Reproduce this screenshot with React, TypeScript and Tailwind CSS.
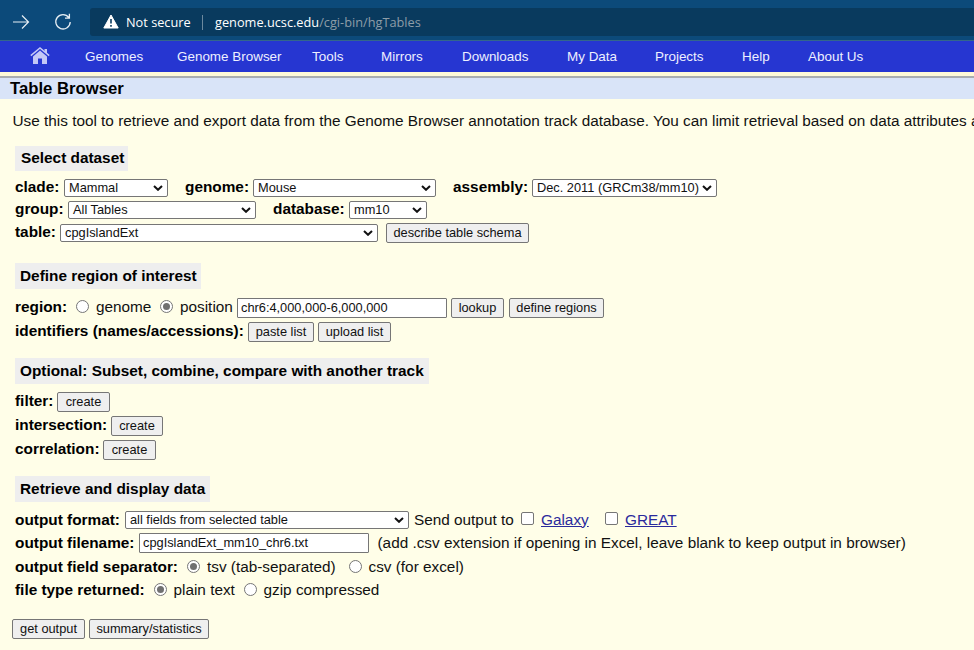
import type { ReactNode } from 'react';

type BoxProps = { className?: string; children?: ReactNode };

function Label({ className = 'pb-[2px]', children }: BoxProps) {
  return <span className={`shrink-0 whitespace-nowrap text-[15.36px] leading-[18px] font-bold text-black ${className}`}>{children}</span>;
}

function Text({ className = '', children }: BoxProps) {
  return <span className={`shrink-0 whitespace-nowrap text-[15.34px] leading-[18px] ${className}`}>{children}</span>;
}

function Select({ className = '', children }: BoxProps) {
  return (
    <span className={`flex h-[18px] shrink-0 items-center justify-between rounded-[2px] border border-[#767676] bg-white pr-[4px] pl-[4px] text-[12.8px] whitespace-nowrap ${className}`}>
      <span>{children}</span>
      <svg className="h-[6px] w-[10px] shrink-0" viewBox="0 0 10 6" fill="none" stroke="#111" strokeWidth="2">
        <path d="M1 1L5 4.8L9 1" />
      </svg>
    </span>
  );
}

function Button({ className = '', children }: BoxProps) {
  return (
    <button className={`flex h-[20px] shrink-0 items-center justify-center rounded-[2px] border border-[#767676] bg-[#efefef] text-[12.8px] whitespace-nowrap ${className}`}>
      {children}
    </button>
  );
}

function Field({ className = '', children }: BoxProps) {
  return (
    <span className={`flex h-[20px] shrink-0 items-center rounded-[1px] border border-[#767676] bg-white pl-[3px] text-[12.8px] whitespace-nowrap ${className}`}>
      {children}
    </span>
  );
}

function Radio({ checked = false, className = '' }: { checked?: boolean; className?: string }) {
  return (
    <span className={`flex size-[13px] shrink-0 items-center justify-center rounded-full border border-[#767676] bg-white ${className}`}>
      {checked && <span className="size-[7px] rounded-full bg-[#707070]" />}
    </span>
  );
}

function Check({ className = '' }: { className?: string }) {
  return <span className={`size-[13px] shrink-0 rounded-[2px] border border-[#767676] bg-white ${className}`} />;
}

function Heading({ className = '', children }: BoxProps) {
  return (
    <h2 className={`flex items-center bg-[#eeeeee] text-[15.36px] font-bold whitespace-nowrap text-black ${className}`}>{children}</h2>
  );
}

function Row({ className = '', children }: BoxProps) {
  return <div className={`flex items-center ${className}`}>{children}</div>;
}

export default function App() {
  return (
    <div className="h-[650px] w-[974px] overflow-hidden bg-[#fffee8] font-['Liberation_Sans',Arial,sans-serif] text-[#111]">
      <div className="flex h-[40px] items-center bg-[#0c4a7a] pt-[4px]">
        <svg className="ml-[12px] size-[18px] shrink-0" viewBox="0 0 18 18" fill="none" stroke="#e6eef4" strokeWidth="1.2">
          <path d="M1 9H16.5M10 2.5L16.5 9L10 15.5" />
        </svg>
        <svg className="ml-[24px] size-[18px] shrink-0" viewBox="0 0 18 18" fill="none" stroke="#e6eef4" strokeWidth="1.3">
          <path d="M14.8 4.5A7.2 7.2 0 1 0 16.2 9M11 5.2H15.4V0.8" />
        </svg>
        <div className="ml-[18px] flex h-[28px] flex-1 items-center rounded-l-[3px] bg-[#093a5e] font-['Open_Sans','Noto_Sans',sans-serif] text-[12.75px] whitespace-nowrap text-white">
          <svg className="-mt-[2px] ml-[13px] h-[15px] w-[16px] shrink-0" viewBox="0 0 16 15">
            <path d="M8 1L15.2 14H0.8Z" fill="#fff" stroke="#fff" strokeWidth="1" strokeLinejoin="round" />
            <path d="M8 5V9.5M8 11V12.7" stroke="#093a5e" strokeWidth="1.6" />
          </svg>
          <span className="ml-[7px] w-[76px] pt-px">Not secure</span>
          <span className="mr-[12px] h-[15px] w-px bg-[#6c899e]" />
          <span className="pt-px">genome.ucsc.edu</span>
          <span className="pt-px text-[#8d9da8]">/cgi-bin/hgTables</span>
        </div>
      </div>
      <div className="h-px bg-[#33668b]" />
      <nav className="flex h-[31px] items-center bg-[#2636d1] pt-px text-[13.44px] whitespace-nowrap text-[#eef0ff]">
        <svg className="-mt-[2px] ml-[30px] h-[18px] w-[20px] shrink-0" viewBox="0 0 20 18">
          <path d="M0.8 8.7L10 1L19.2 8.7" fill="none" stroke="#c4c8f6" strokeWidth="1.5" />
          <path d="M14.5 2H17V7L14.5 5ZM10 3.6L17 9.6V17H12V11.5H8V17H3V9.6Z" fill="#c4c8f6" />
        </svg>
        <span className="ml-[35px] w-[92px]">Genomes</span>
        <span className="w-[135px]">Genome Browser</span>
        <span className="w-[69px]">Tools</span>
        <span className="w-[81px]">Mirrors</span>
        <span className="w-[105px]">Downloads</span>
        <span className="w-[88px]">My Data</span>
        <span className="w-[87px]">Projects</span>
        <span className="w-[66px]">Help</span>
        <span>About Us</span>
      </nav>
      <div className="h-[4px] bg-[#fff9d8]" />
      <div className="h-[2px] bg-[#a9adb0]" />
      <h1 className="flex h-[21px] items-center bg-[#d9e4f8] pl-[10px] text-[16.7px] font-bold text-black">Table Browser</h1>
      <p className="mt-[13px] pl-[12.5px] text-[15.34px] leading-[18px] whitespace-nowrap">
        Use this tool to retrieve and export data from the Genome Browser annotation track database. You can limit retrieval based on data attributes a
      </p>

      <main className="pt-[16px] pl-[15px]">
        <Heading className="h-[25px] w-[113px] pb-[2px] pl-[6px]">Select dataset</Heading>
        <Row className="mt-[8px] h-[18px]">
          <Label className="w-[49px] pb-[2px]">clade:</Label>
          <Select className="w-[104px]">Mammal</Select>
          <Label className="ml-[17px] w-[68px] pb-[2px]">genome:</Label>
          <Select className="w-[183px]">Mouse</Select>
          <Label className="ml-[17px] w-[79px] pb-[2px]">assembly:</Label>
          <Select className="w-[185px]">Dec. 2011 (GRCm38/mm10)</Select>
        </Row>
        <Row className="mt-[4px] h-[18px]">
          <Label className="w-[53px] pb-[2px]">group:</Label>
          <Select className="w-[188px]">All Tables</Select>
          <Label className="ml-[17px] w-[76px] pb-[2px]">database:</Label>
          <Select className="w-[78px]">mm10</Select>
        </Row>
        <Row className="mt-[4px] h-[20px]">
          <Label className="w-[45px] pb-[2px]">table:</Label>
          <Select className="w-[318px]">cpgIslandExt</Select>
          <Button className="ml-[8px] w-[143px]">describe table schema</Button>
        </Row>

        <Heading className="mt-[20px] h-[26px] w-[186px] pl-[5px]">Define region of interest</Heading>
        <Row className="mt-[9px] h-[20px]">
          <Label className="w-[61px] pb-[2px]">region:</Label>
          <Radio className="-mt-[4px]" />
          <Text className="ml-[7px] w-[64px] pb-[2px]">genome</Text>
          <Radio checked className="-mt-[4px]" />
          <Text className="ml-[7px] w-[57px] pb-[2px]">position</Text>
          <Field className="w-[210px]">chr6:4,000,000-6,000,000</Field>
          <Button className="ml-[4px] w-[53px]">lookup</Button>
          <Button className="ml-[5px] w-[95px]">define regions</Button>
        </Row>
        <Row className="mt-[4px] h-[20px]">
          <Label className="w-[233px] pb-[2px]">identifiers (names/accessions):</Label>
          <Button className="w-[66px]">paste list</Button>
          <Button className="ml-[4px] w-[73px]">upload list</Button>
        </Row>

        <Heading className="mt-[16px] h-[26px] w-[414px] pl-[5px]">Optional: Subset, combine, compare with another track</Heading>
        <Row className="mt-[8px] h-[20px]">
          <Label className="w-[42px] pb-[2px]">filter:</Label>
          <Button className="w-[53px]">create</Button>
        </Row>
        <Row className="mt-[4px] h-[20px]">
          <Label className="w-[96px] pb-[2px]">intersection:</Label>
          <Button className="w-[52px]">create</Button>
        </Row>
        <Row className="mt-[4px] h-[20px]">
          <Label className="w-[88px] pb-[2px]">correlation:</Label>
          <Button className="w-[53px]">create</Button>
        </Row>

        <Heading className="mt-[16px] h-[26px] w-[195px] pl-[5px]">Retrieve and display data</Heading>
        <Row className="mt-[9px] h-[18px]">
          <Label className="w-[110px] pb-px">output format:</Label>
          <Select className="w-[284px]">all fields from selected table</Select>
          <Text className="ml-[5px] w-[107px] pb-px">Send output to</Text>
          <Check className="-mt-[3px]" />
          <Text className="ml-[7px] w-[64px] pb-px text-[#2a2a9c] underline">Galaxy</Text>
          <Check className="-mt-[3px]" />
          <Text className="ml-[7px] pb-px text-[#2a2a9c] underline">GREAT</Text>
        </Row>
        <Row className="mt-[4px] h-[20px]">
          <Label className="w-[124px] pb-px">output filename:</Label>
          <Field className="w-[230px]">cpgIslandExt_mm10_chr6.txt</Field>
          <Text className="ml-[8.5px] pb-px">(add .csv extension if opening in Excel, leave blank to keep output in browser)</Text>
        </Row>
        <Row className="mt-[4px] h-[20px]">
          <Label className="w-[172px]">output field separator:</Label>
          <Radio checked className="-mt-[2px]" />
          <Text className="ml-[7px] w-[142px]">tsv (tab-separated)</Text>
          <Radio className="-mt-[2px]" />
          <Text className="ml-[6.5px]">csv (for excel)</Text>
        </Row>
        <Row className="mt-[3px] h-[20px]">
          <Label className="w-[139px]">file type returned:</Label>
          <Radio checked className="-mt-[2px]" />
          <Text className="ml-[6.5px] w-[70.5px]">plain text</Text>
          <Radio className="-mt-[2px]" />
          <Text className="ml-[6.5px]">gzip compressed</Text>
        </Row>
      </main>
      <Row className="mt-[19px] h-[20px] pl-[12px]">
        <Button className="w-[73px]">get output</Button>
        <Button className="ml-[4px] w-[120px]">summary/statistics</Button>
      </Row>
    </div>
  );
}
